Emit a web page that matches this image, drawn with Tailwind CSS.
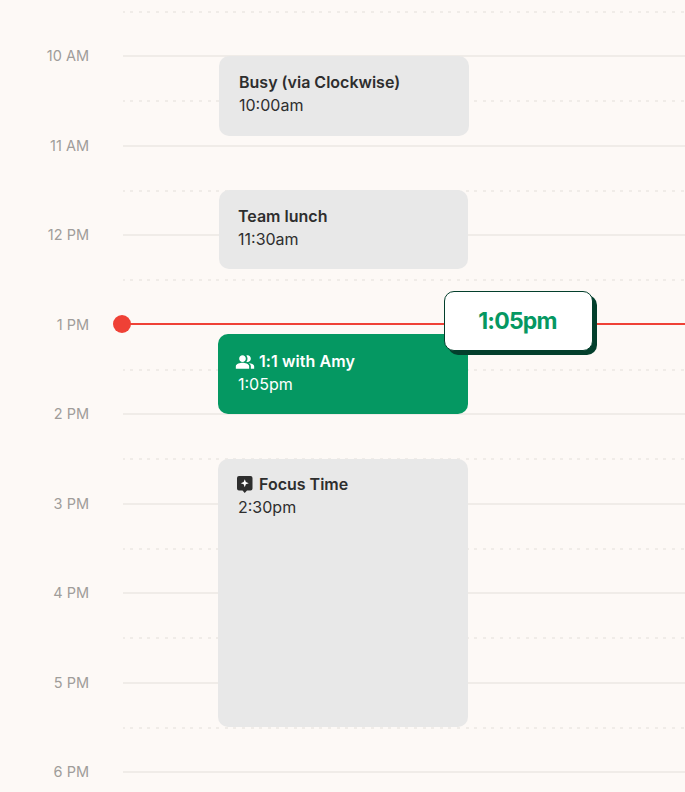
<!DOCTYPE html>
<html>
<head>
<meta charset="utf-8">
<script src="https://cdn.jsdelivr.net/npm/@tailwindcss/browser@4"></script>
</head>
<body class="bg-[#fdf9f6] font-['Inter','Liberation_Sans',sans-serif]">
<main class="relative w-[685px] h-[792px] overflow-hidden pt-[10.5px]">
  <div class="flex h-[44.75px]"><div class="w-[123px]"></div><div class="flex-1 h-[2px] bg-[repeating-linear-gradient(90deg,#f0ece8_0,#f0ece8_1.5px,transparent_1.5px,transparent_7.1px,#f0ece8_7.1px,#f0ece8_8.6px)]"></div></div>
  <div class="flex h-[44.75px]"><div class="w-[123px] pr-[34px] text-right text-[14.5px] leading-none text-[#a09d9a]"><span class="block translate-y-[-5.75px]">10 AM</span></div><div class="flex-1 h-[2px] bg-[#f0ece8]"></div></div>
  <div class="flex h-[44.75px]"><div class="w-[123px]"></div><div class="flex-1 h-[2px] bg-[repeating-linear-gradient(90deg,#f0ece8_0,#f0ece8_1.5px,transparent_1.5px,transparent_7.1px,#f0ece8_7.1px,#f0ece8_8.6px)]"></div></div>
  <div class="flex h-[44.75px]"><div class="w-[123px] pr-[34px] text-right text-[14.5px] leading-none text-[#a09d9a]"><span class="block translate-y-[-5.75px]">11 AM</span></div><div class="flex-1 h-[2px] bg-[#f0ece8]"></div></div>
  <div class="flex h-[44.75px]"><div class="w-[123px]"></div><div class="flex-1 h-[2px] bg-[repeating-linear-gradient(90deg,#f0ece8_0,#f0ece8_1.5px,transparent_1.5px,transparent_7.1px,#f0ece8_7.1px,#f0ece8_8.6px)]"></div></div>
  <div class="flex h-[44.75px]"><div class="w-[123px] pr-[34px] text-right text-[14.5px] leading-none text-[#a09d9a]"><span class="block translate-y-[-5.75px]">12 PM</span></div><div class="flex-1 h-[2px] bg-[#f0ece8]"></div></div>
  <div class="flex h-[44.75px]"><div class="w-[123px]"></div><div class="flex-1 h-[2px] bg-[repeating-linear-gradient(90deg,#f0ece8_0,#f0ece8_1.5px,transparent_1.5px,transparent_7.1px,#f0ece8_7.1px,#f0ece8_8.6px)]"></div></div>
  <div class="flex h-[44.75px]"><div class="w-[123px] pr-[34px] text-right text-[14.5px] leading-none text-[#a09d9a]"><span class="block translate-y-[-5.75px]">1 PM</span></div><div class="flex-1"></div></div>
  <div class="flex h-[44.75px]"><div class="w-[123px]"></div><div class="flex-1 h-[2px] bg-[repeating-linear-gradient(90deg,#f0ece8_0,#f0ece8_1.5px,transparent_1.5px,transparent_7.1px,#f0ece8_7.1px,#f0ece8_8.6px)]"></div></div>
  <div class="flex h-[44.75px]"><div class="w-[123px] pr-[34px] text-right text-[14.5px] leading-none text-[#a09d9a]"><span class="block translate-y-[-5.75px]">2 PM</span></div><div class="flex-1 h-[2px] bg-[#f0ece8]"></div></div>
  <div class="flex h-[44.75px]"><div class="w-[123px]"></div><div class="flex-1 h-[2px] bg-[repeating-linear-gradient(90deg,#f0ece8_0,#f0ece8_1.5px,transparent_1.5px,transparent_7.1px,#f0ece8_7.1px,#f0ece8_8.6px)]"></div></div>
  <div class="flex h-[44.75px]"><div class="w-[123px] pr-[34px] text-right text-[14.5px] leading-none text-[#a09d9a]"><span class="block translate-y-[-5.75px]">3 PM</span></div><div class="flex-1 h-[2px] bg-[#f0ece8]"></div></div>
  <div class="flex h-[44.75px]"><div class="w-[123px]"></div><div class="flex-1 h-[2px] bg-[repeating-linear-gradient(90deg,#f0ece8_0,#f0ece8_1.5px,transparent_1.5px,transparent_7.1px,#f0ece8_7.1px,#f0ece8_8.6px)]"></div></div>
  <div class="flex h-[44.75px]"><div class="w-[123px] pr-[34px] text-right text-[14.5px] leading-none text-[#a09d9a]"><span class="block translate-y-[-5.75px]">4 PM</span></div><div class="flex-1 h-[2px] bg-[#f0ece8]"></div></div>
  <div class="flex h-[44.75px]"><div class="w-[123px]"></div><div class="flex-1 h-[2px] bg-[repeating-linear-gradient(90deg,#f0ece8_0,#f0ece8_1.5px,transparent_1.5px,transparent_7.1px,#f0ece8_7.1px,#f0ece8_8.6px)]"></div></div>
  <div class="flex h-[44.75px]"><div class="w-[123px] pr-[34px] text-right text-[14.5px] leading-none text-[#a09d9a]"><span class="block translate-y-[-5.75px]">5 PM</span></div><div class="flex-1 h-[2px] bg-[#f0ece8]"></div></div>
  <div class="flex h-[44.75px]"><div class="w-[123px]"></div><div class="flex-1 h-[2px] bg-[repeating-linear-gradient(90deg,#f0ece8_0,#f0ece8_1.5px,transparent_1.5px,transparent_7.1px,#f0ece8_7.1px,#f0ece8_8.6px)]"></div></div>
  <div class="flex h-[44.75px]"><div class="w-[123px] pr-[34px] text-right text-[14.5px] leading-none text-[#a09d9a]"><span class="block translate-y-[-5.75px]">6 PM</span></div><div class="flex-1 h-[2px] bg-[#f0ece8]"></div></div>

  <div class="absolute left-[219px] top-[56px] w-[250px] h-[80px] rounded-[10px] bg-[#e8e8e8] px-5 pt-[15px] text-[#2e2e2e]">
    <div class="text-[16px] leading-[23px] font-semibold">Busy (via Clockwise)</div>
    <div class="text-[16px] leading-[23px]">10:00am</div>
  </div>
  <div class="absolute left-[218.5px] top-[190px] w-[249.5px] h-[79px] rounded-[10px] bg-[#e8e8e8] pl-[19.5px] pr-5 pt-[15px] text-[#2e2e2e]">
    <div class="text-[16px] leading-[23px] font-semibold">Team lunch</div>
    <div class="text-[16px] leading-[23px]">11:30am</div>
  </div>
  <div class="absolute left-[218px] top-[334px] w-[250px] h-[80px] rounded-[10px] bg-[#059862] px-5 pt-[16px] text-white">
    <div class="flex items-center gap-[4px] text-[16px] leading-[23px] font-semibold tracking-[0.08px]">
      <svg class="w-[20px] h-[20px] -ml-[3px]" viewBox="0 0 24 24" fill="#fff"><path d="M16.67 13.13C18.04 14.06 19 15.32 19 17v3h4v-3c0-2.18-3.57-3.47-6.33-3.87zM15 12c2.21 0 4-1.79 4-4s-1.79-4-4-4c-.47 0-.91.1-1.33.24C14.5 5.27 15 6.58 15 8s-.5 2.73-1.33 3.76c.42.14.86.24 1.33.24zM9 12c2.21 0 4-1.79 4-4s-1.79-4-4-4-4 1.79-4 4 1.79 4 4 4zm0 1c-2.67 0-8 1.34-8 4v3h16v-3c0-2.66-5.33-4-8-4z"/></svg>
      <span>1:1 with Amy</span>
    </div>
    <div class="text-[16px] leading-[23px]">1:05pm</div>
  </div>
  <div class="absolute left-[218px] top-[458.5px] w-[250px] h-[268.5px] rounded-[10px] bg-[#e8e8e8] px-5 pt-[14.5px] text-[#2e2e2e]">
    <div class="flex items-center gap-[6.5px] text-[16px] leading-[23px] font-semibold">
      <svg class="w-[15.5px] h-[17px] -ml-[1px]" viewBox="0 0 15.5 17"><path fill="#2e2e2e" d="M2 0h11.5a2 2 0 0 1 2 2v10.5a2 2 0 0 1-2 2H10L7.75 17 5.5 14.5H2a2 2 0 0 1-2-2V2a2 2 0 0 1 2-2z"/><path fill="#fff" d="M7.75 3.2l1.1 2.9 2.9 1.1-2.9 1.1-1.1 2.9-1.1-2.9-2.9-1.1 2.9-1.1z"/></svg>
      <span>Focus Time</span>
    </div>
    <div class="text-[16px] leading-[23px]">2:30pm</div>
  </div>

  <div class="absolute left-[113px] top-[315px] w-[18px] h-[18px] rounded-full bg-[#ef4136]"></div>
  <div class="absolute left-[122px] right-0 top-[323px] h-[2px] bg-[#ef4136]"></div>
  <div class="absolute left-[444px] top-[291px] w-[149px] h-[60px] flex items-center justify-center rounded-[10px] border border-[#033f2c] bg-white shadow-[4px_4px_0_0_#033f2c] pr-[2px] text-[23px] font-bold tracking-[-0.8px] text-[#059862]">1:05pm</div>
</main>
</body>
</html>
